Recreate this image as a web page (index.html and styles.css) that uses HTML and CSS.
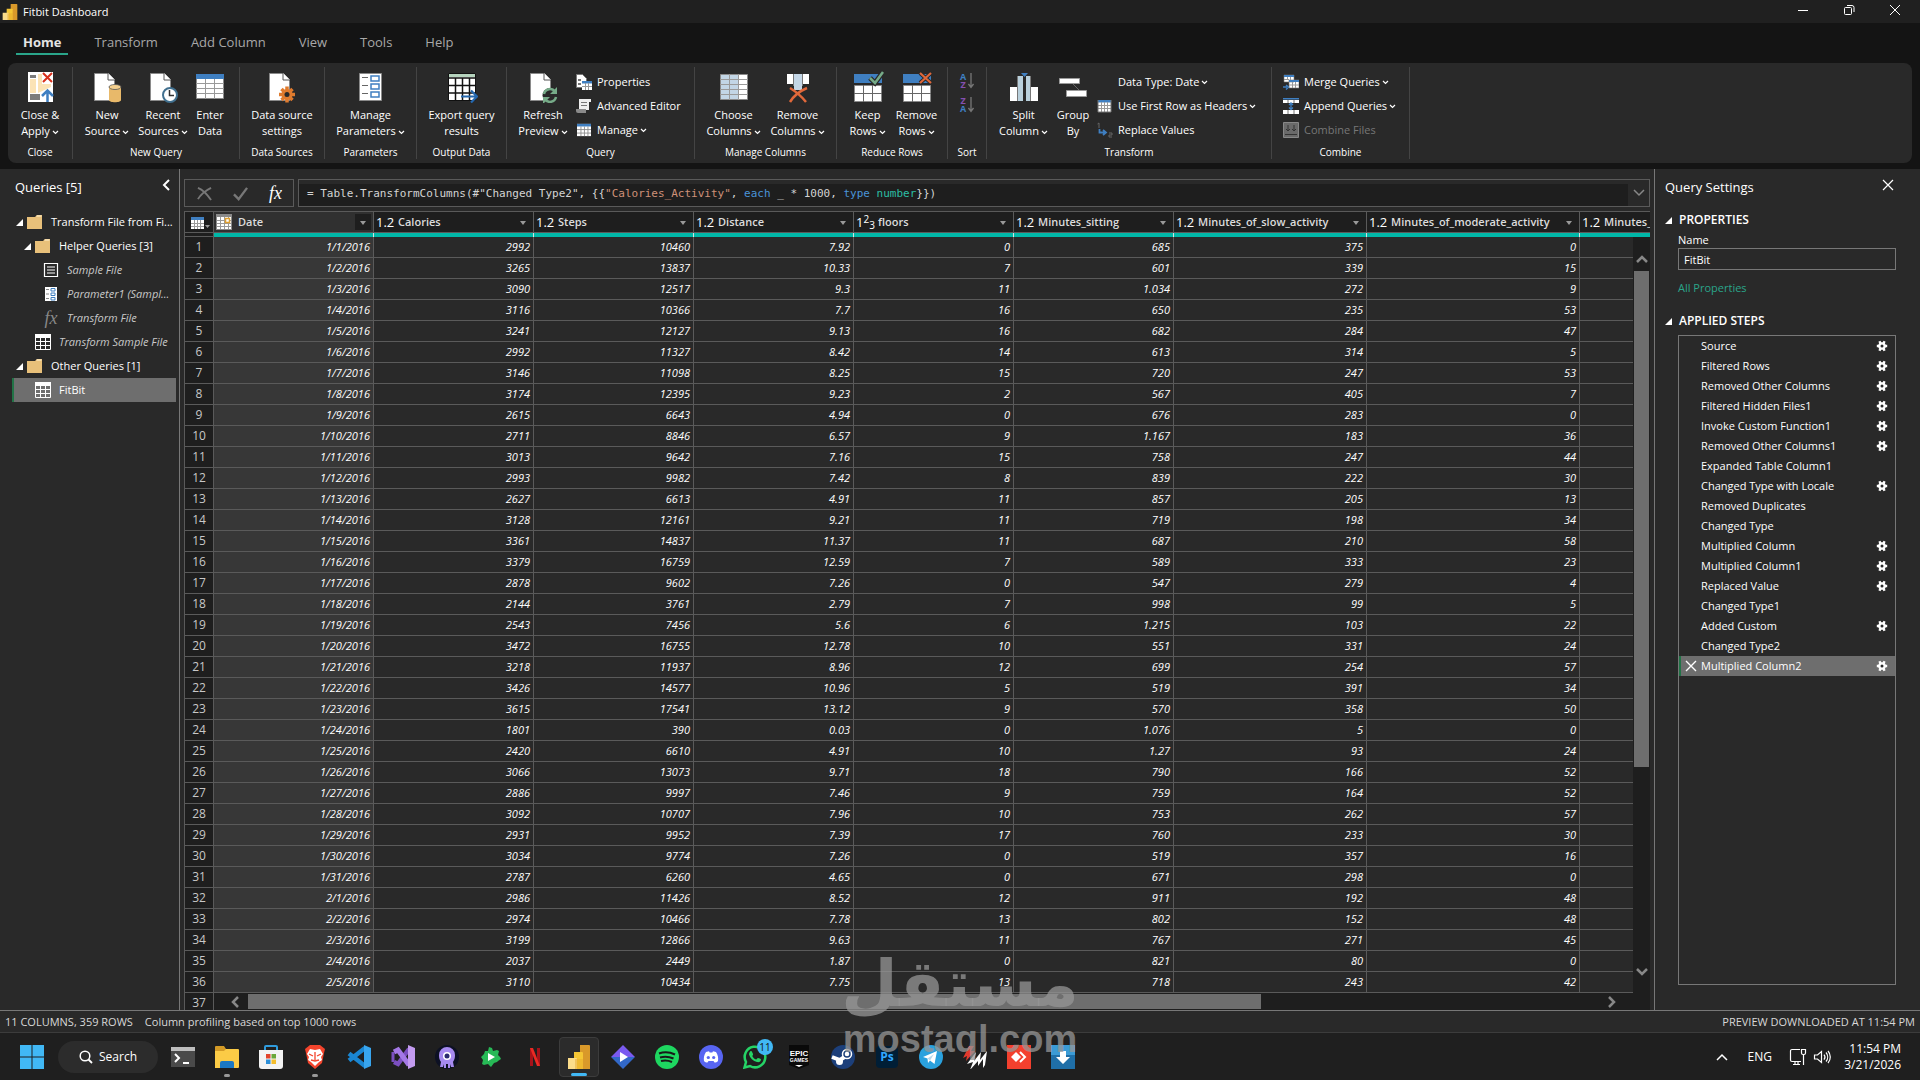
FILE: index.html
```html
<!DOCTYPE html>
<html lang="en">
<head>
    <meta charset="UTF-8">
    <meta name="viewport" content="width=device-width, initial-scale=1.0">
    <title>Fitbit Dashboard</title>
    <link rel="stylesheet" href="styles.css">
</head>
<body>
    <!-- Shared icons -->
    <svg class="sprite" aria-hidden="true">
        <symbol id="i-chev" viewBox="0 0 7 5"><path d="M1 1l2.5 2.5L6 1" fill="none" stroke="currentColor" stroke-width="1.2"/></symbol>
        <symbol id="i-gear" viewBox="0 0 12 12"><g stroke="#fff" stroke-width="2.4"><path d="M6 .8v10.400M1.200 3.400l9.600 5.200M10.800 3.400L1.200 8.600" transform="rotate(90 6 6)"/></g><circle cx="6" cy="6" r="3.800" fill="#fff"/><circle cx="6" cy="6" r="1.500" fill="#292929"/></symbol>
        <symbol id="i-tri" viewBox="0 0 7 7"><path d="M7 0v7H0z" fill="#fff"/></symbol>
        <symbol id="i-folder" viewBox="0 0 16 14"><path d="M0 2h8l2-2h5v14H0z" fill="#e8c07a"/><path d="M9.500 1h5" stroke="#fff3d6"/></symbol>
        <symbol id="i-doc" viewBox="0 0 32 32"><path d="M3.500 2.500h14l6 6v21h-20z" fill="#fff" stroke="#8a8a8a"/><path d="M17 2v7h7" fill="#fff" stroke="#555"/></symbol>
        <symbol id="i-table" viewBox="0 0 16 14"><path d="M0 0h16v14H0z" fill="#fff"/><path d="M0 0h16v3H0z" fill="#3f7fc1"/><path d="M0 6.500h16M0 10.500h16M4.500 3v11M8.500 3v11M12.500 3v11" stroke="#8a8a8a"/></symbol>
        <symbol id="i-grid" viewBox="0 0 16 16"><path d="M.5 1.500h15v14H.5zM.5 7.500h15M.5 11.500h15M5.500 4v12M10.500 4v12" fill="none" stroke="#fff"/><path d="M0 0h16v4H0z" fill="#fff"/></symbol>
        <symbol id="i-bi" viewBox="0 0 24 24"><path d="M13 0h9a1 1 0 0 1 1 1v23H13z" fill="#d9992a"/><path d="M7 7h8a1 1 0 0 1 1 1v16H7z" fill="#f5c634"/><path d="M1 13h8a1 1 0 0 1 1 1v10H1z" fill="#fbdc8a"/><path d="M8 14h8v10H8z" fill="#e8a92c" opacity=".5"/></symbol>
        <symbol id="i-rows" viewBox="0 0 32 32"><path d="M2 3h28v9H2z" fill="#3f7fc1"/><path d="M2.500 14.500h27v16h-27z" fill="#fff" stroke="#8a8a8a"/><path d="M2 22.500h28M11.500 14v17M20.500 14v17" stroke="#666"/></symbol>
    </svg>

    <header class="titlebar">
        <svg class="app-logo"><use href="#i-bi"/></svg>
        <h1>Fitbit Dashboard</h1>
        <div class="window-btns">
            <button aria-label="Minimize"><svg viewBox="0 0 12 12"><path d="M1 6.500h10" stroke="#fff"/></svg></button>
            <button aria-label="Restore"><svg viewBox="0 0 12 12" fill="none" stroke="#fff"><rect x="1.500" y="3.500" width="7" height="7" rx="1"/><path d="M4 1.500h5a2 2 0 0 1 2 2V8"/></svg></button>
            <button aria-label="Close"><svg viewBox="0 0 12 12"><path d="M1 1l10 10M11 1L1 11" stroke="#fff"/></svg></button>
        </div>
    </header>

    <nav class="tabs">
        <button class="tab active">Home</button>
        <button class="tab">Transform</button>
        <button class="tab">Add Column</button>
        <button class="tab">View</button>
        <button class="tab">Tools</button>
        <button class="tab">Help</button>
    </nav>

    <section class="ribbon">
        <div class="group">
            <div class="tools">
                <button class="big"><svg viewBox="0 0 32 32"><path d="M4 1h25v30H4z" fill="#fff"/><path d="M6 8h6v14H6zM14 3h4v10h9v3L14 22z" fill="#fbe3b5"/><path d="M6 4h6v3H6zM6 23h10v6H6z" fill="#7c7c7c"/><path d="M19 2l9 9M28 2l-9 9" stroke="#d8301c" stroke-width="2"/><path d="M23.500 31V20M18 25l5.500-5.500L29 25" fill="none" stroke="#3f7fc1" stroke-width="2.500"/></svg><span>Close &amp;<br>Apply<svg class="chev"><use href="#i-chev"/></svg></span></button>
            </div>
            <p>Close</p>
        </div>
        <div class="group new-query">
            <div class="tools">
                <button class="big"><svg viewBox="0 0 32 32"><use href="#i-doc"/><path d="M18 16v13c0 3 12 3 12 0V16z" fill="#e8b96a"/><ellipse cx="24" cy="16" rx="6" ry="2.500" fill="#f3cf8e" stroke="#555" stroke-width=".8"/></svg><span>New<br>Source<svg class="chev"><use href="#i-chev"/></svg></span></button>
                <button class="big"><svg viewBox="0 0 32 32"><use href="#i-doc"/><circle cx="23" cy="24" r="7" fill="#fff" stroke="#41708f" stroke-width="2"/><path d="M22.500 19v5.500H27" fill="none" stroke="#333" stroke-width="1.500"/></svg><span>Recent<br>Sources<svg class="chev"><use href="#i-chev"/></svg></span></button>
                <button class="big"><svg viewBox="0 0 32 32"><path d="M2.500 3.500h27v24h-27z" fill="#fff" stroke="#8a8a8a"/><path d="M2 3h28v5H2z" fill="#3f7fc1"/><path d="M2 12.500h28M2 17.500h28M2 22.500h28M11.500 8v20M20.500 8v20" stroke="#999"/></svg><span>Enter<br>Data</span></button>
            </div>
            <p>New Query</p>
        </div>
        <div class="group">
            <div class="tools">
                <button class="big"><svg viewBox="0 0 32 32"><use href="#i-doc"/><g stroke="#e07b2e" stroke-width="3.500"><path d="M21 15.500v16M13 23.500h16M15.500 18l11 11M26.500 18l-11 11"/></g><circle cx="21" cy="23.500" r="5.500" fill="#e07b2e"/><circle cx="21" cy="23.500" r="2.500" fill="#292929"/></svg><span>Data source<br>settings</span></button>
            </div>
            <p>Data Sources</p>
        </div>
        <div class="group">
            <div class="tools">
                <button class="big"><svg viewBox="0 0 32 32"><path d="M5.500 2.500h22v27h-22z" fill="#fff" stroke="#8a8a8a"/><path d="M8 6.500h6M8 14.500h6M8 22.500h6" stroke="#666"/><path d="M17 5h8v5h-8zM17 13h8v5h-8zM17 21h8v5h-8z" fill="none" stroke="#3f7fc1" stroke-width="1.500"/></svg><span>Manage<br>Parameters<svg class="chev"><use href="#i-chev"/></svg></span></button>
            </div>
            <p>Parameters</p>
        </div>
        <div class="group">
            <div class="tools">
                <button class="big"><svg viewBox="0 0 32 32"><path d="M2.500 2.500h27v27h-27z" fill="#fff" stroke="#111"/><path d="M3 3h26v3H3z" fill="#b5d3bd"/><path d="M2 7h28M2 14.500h28M2 22h28M9.500 7v23M16.500 7v23M23.500 7v23" stroke="#111" stroke-width="1.500"/><path d="M15 25.500h15M25 19.500l6 6-6 6" fill="none" stroke="#2468b0" stroke-width="2.200"/></svg><span>Export query<br>results</span></button>
            </div>
            <p>Output Data</p>
        </div>
        <div class="group query">
            <div class="tools">
                <button class="big"><svg viewBox="0 0 32 32"><use href="#i-doc"/><circle cx="23" cy="24.500" r="7.500" fill="#292929"/><path d="M17 23a6 6 0 0 1 11-2M29 26a6 6 0 0 1-11 2" fill="none" stroke="#76ab88" stroke-width="2.500"/><path d="M30 16v7h-7zM16 33v-7h7z" fill="#76ab88"/></svg><span>Refresh<br>Preview<svg class="chev"><use href="#i-chev"/></svg></span></button>
                <div class="list">
                    <button><svg viewBox="0 0 16 16"><path d="M.5.5h6l4 4v9H.5z" fill="#fff" stroke="#777"/><path d="M2 5h3v2H2zM2 9h3v2H2z" fill="#777"/><path d="M6 7h10v9H6z" fill="#fff"/><path d="M6 7h10v2.500H6z" fill="#3f7fc1"/><path d="M6 12.500h10M9.500 9v7M12.500 9v7" stroke="#999"/></svg>Properties</button>
                    <button><svg viewBox="0 0 16 16"><path d="M3 1h12v3h-2v8H3z" fill="#eee"/><path d="M0 11h10v4H2a2 2 0 0 1-2-2z" fill="#8a8a8a"/><path d="M5 4.500h6M5 7.500h6" stroke="#777"/></svg>Advanced Editor</button>
                    <button><svg viewBox="0 0 16 16"><use href="#i-table" x="1" y="1" width="14" height="14"/></svg>Manage<svg class="chev"><use href="#i-chev"/></svg></button>
                </div>
            </div>
            <p>Query</p>
        </div>
        <div class="group">
            <div class="tools">
                <button class="big col"><svg viewBox="0 0 32 32"><path d="M2.500 3.500h27v25h-27z" fill="#fff" stroke="#8a8a8a"/><path d="M3 4h18v24H3z" fill="#c3d6e6"/><path d="M2 8.500h28M2 13.500h28M2 18.500h28M2 23.500h28M11.500 3v26M20.500 3v26" stroke="#9a9a9a"/></svg><span>Choose<br>Columns<svg class="chev"><use href="#i-chev"/></svg></span></button>
                <button class="big col"><svg viewBox="0 0 32 32"><path d="M5 3h22v10H5z" fill="#fff"/><path d="M12 3h8v16h-8z" fill="#c3d6e6"/><path d="M11.500 3v12M20.500 3v12" stroke="#777"/><path d="M8 17c5 3 12 9 16 14M25 17C18 20 11 26 8 31" fill="none" stroke="#e0683a" stroke-width="2.500"/></svg><span>Remove<br>Columns<svg class="chev"><use href="#i-chev"/></svg></span></button>
            </div>
            <p>Manage Columns</p>
        </div>
        <div class="group">
            <div class="tools">
                <button class="big row"><svg viewBox="0 0 32 32"><use href="#i-rows"/><path d="M18 7l5 5 8-11" fill="none" stroke="#292929" stroke-width="5"/><path d="M18 7l5 5 8-11" fill="none" stroke="#76ab88" stroke-width="2.500"/></svg><span>Keep<br>Rows<svg class="chev"><use href="#i-chev"/></svg></span></button>
                <button class="big row"><svg viewBox="0 0 32 32"><use href="#i-rows"/><path d="M19 2l11 10M30 2L19 12" stroke="#292929" stroke-width="4"/><path d="M19 2l11 10M30 2L19 12" stroke="#e0683a" stroke-width="2.200"/></svg><span>Remove<br>Rows<svg class="chev"><use href="#i-chev"/></svg></span></button>
            </div>
            <p>Reduce Rows</p>
        </div>
        <div class="group">
            <div class="sort">
                <button aria-label="Sort ascending"><span class="letters"><b class="a">A</b><b class="z">Z</b></span><svg viewBox="0 0 6 16"><path d="M3 0v13M.5 11L3 14.500 5.500 11" fill="none" stroke="#777" stroke-width="1.300"/></svg></button>
                <button aria-label="Sort descending"><span class="letters"><b class="z">Z</b><b class="a">A</b></span><svg viewBox="0 0 6 16"><path d="M3 0v13M.5 11L3 14.500 5.500 11" fill="none" stroke="#777" stroke-width="1.300"/></svg></button>
            </div>
            <p>Sort</p>
        </div>
        <div class="group transform">
            <div class="tools">
                <button class="big split"><svg viewBox="0 0 32 32"><path d="M2 16h7v14H2zM23 16h7v14h-7z" fill="#fff"/><path d="M10 5h5v25h-5zM18 5h5v25h-5z" fill="#b9d0dc"/><path d="M13 2h7l-3.500 4z" fill="#3f7fc1"/><path d="M9.500 5v25M22.500 5v25" stroke="#777"/></svg><span>Split<br>Column<svg class="chev"><use href="#i-chev"/></svg></span></button>
                <button class="big by"><svg viewBox="0 0 32 32"><path d="M2.500 7.500h20v5h-20zM9.500 19.500h20v6h-20z" fill="#fff" stroke="#9a9a9a"/><path d="M16 13l6 6" stroke="#666"/></svg><span>Group<br>By</span></button>
                <div class="list">
                    <button><svg viewBox="0 0 16 16"></svg>Data Type: Date<svg class="chev"><use href="#i-chev"/></svg></button>
                    <button><svg viewBox="0 0 16 16"><path d="M1 2h13v12H1z" fill="#fff"/><path d="M1 2h13v2.500H1z" fill="#3f7fc1"/><path d="M1 7.500h13M1 10.500h13M4.500 4v10M7.500 4v10M10.500 4v10" stroke="#999"/><path d="M1 2v12h13V2" fill="none" stroke="#777"/></svg>Use First Row as Headers<svg class="chev"><use href="#i-chev"/></svg></button>
                    <button><svg viewBox="0 0 16 16"><path d="M.5 2l1.500-1v5M12 11h3v2h-3v2h3" fill="none" stroke="#666"/><path d="M2.500 7v3.500H8M6 8l3 2.500L6 13" fill="none" stroke="#3f7fc1" stroke-width="1.800"/></svg>Replace Values</button>
                </div>
            </div>
            <p>Transform</p>
        </div>
        <div class="group combine">
            <div class="tools">
                <div class="list">
                    <button><svg viewBox="0 0 16 16"><path d="M1 1h10v7H1zM6 6h10v8H6z" fill="#fff" stroke="#777" stroke-width=".6"/><path d="M1 1h10v2H1zM6 6h10v2H6z" fill="#3f7fc1"/><path d="M1 5.500h5M4.500 3v3M7.500 3v3M6 11h10M9.500 8v6M12.500 8v6" stroke="#999"/><path d="M0 13h4M3 11l2.500 2L3 15.500" fill="none" stroke="#3f7fc1" stroke-width="1.500"/></svg>Merge Queries<svg class="chev"><use href="#i-chev"/></svg></button>
                    <button><svg viewBox="0 0 16 16"><path d="M0 0h16v1.500H0z" fill="#3f7fc1"/><path d="M0 2h16v3H0zM0 12h16v4H0z" fill="#fff"/><path d="M5 2v3M11 2v3M5 12v4M11 12v4" stroke="#777"/><path d="M8 5v6M6 7l2-2 2 2M6 9.500l2 2 2-2" fill="none" stroke="#3f7fc1" stroke-width="1.300"/></svg>Append Queries<svg class="chev"><use href="#i-chev"/></svg></button>
                    <button disabled><svg viewBox="0 0 16 16"><path d="M.5.5h15v15H.5z" fill="#6a6a6a" stroke="#888"/><path d="M5 3v6M3 7l2 2 2-2M11 3v6M9 7l2 2 2-2M2 12.500h12" fill="none" stroke="#333"/></svg>Combine Files</button>
                </div>
            </div>
            <p>Combine</p>
        </div>
    </section>

    <main class="workspace">
        <aside class="queries">
            <div class="pane-head">
                <h2>Queries [5]</h2>
                <button aria-label="Collapse"><svg viewBox="0 0 8 12"><path d="M7 1L2 6l5 5" fill="none" stroke="#fff" stroke-width="2"/></svg></button>
            </div>
            <ul class="tree">
                <li class="l1"><svg class="tri"><use href="#i-tri"/></svg><svg class="folder"><use href="#i-folder"/></svg><span>Transform File from Fi...</span></li>
                <li class="l2"><svg class="tri"><use href="#i-tri"/></svg><svg class="folder"><use href="#i-folder"/></svg><span>Helper Queries [3]</span></li>
                <li class="l3 item"><svg viewBox="0 0 16 16"><path d="M1.500 1.500h13v13h-13zM4 5h8M4 8h8M4 11h8" fill="none" stroke="#fff" stroke-width="1.200"/></svg><span>Sample File</span></li>
                <li class="l3 item"><svg viewBox="0 0 16 16"><path d="M2 1h12v14H2z" fill="#fff"/><path d="M3 3.500h3M3 8h3M3 12.500h3" stroke="#888"/><path d="M8 2.500h4v2.500H8zM8 7h4v2.500H8zM8 11.500h4V14H8z" fill="none" stroke="#3f7fc1"/></svg><span>Parameter1 (Sampl...</span></li>
                <li class="l3 item"><i class="fx">fx</i><span>Transform File</span></li>
                <li class="l2 item"><svg><use href="#i-grid"/></svg><span>Transform Sample File</span></li>
                <li class="l1"><svg class="tri"><use href="#i-tri"/></svg><svg class="folder"><use href="#i-folder"/></svg><span>Other Queries [1]</span></li>
                <li class="selected"><svg><use href="#i-grid"/></svg><span>FitBit</span></li>
            </ul>
        </aside>

        <section class="editor">
            <div class="formula">
                <div class="formula-btns">
                    <button aria-label="Cancel"><svg viewBox="0 0 16 16"><path d="M1 2c5 2 10 7 14 13M15 2C9 5 4 9 1 14" fill="none" stroke="#777" stroke-width="2"/></svg></button>
                    <button aria-label="Commit"><svg viewBox="0 0 16 16"><path d="M1 9l5 5L15 2" fill="none" stroke="#777" stroke-width="2.500"/></svg></button>
                    <button aria-label="Add step" class="fx">fx</button>
                </div>
                <div class="formula-text">
                    <code>= Table.TransformColumns(#"Changed Type2", {{<span class="str">"Calories_Activity"</span>, <span class="kw">each</span> _ * 1000, <span class="kw">type</span> <span class="ty">number</span>}})</code>
                    <button aria-label="Expand"><svg viewBox="0 0 12 8"><path d="M1 1l5 5 5-5" fill="none" stroke="#888" stroke-width="1.500"/></svg></button>
                </div>
            </div>

            <div class="grid">
                <table>
                    <colgroup>
                        <col class="c-num"><col class="c-std"><col class="c-std"><col class="c-std"><col class="c-std"><col class="c-std"><col class="c-std"><col class="c-slow"><col class="c-moderate"><col class="c-last">
                    </colgroup>
                    <thead>
                        <tr id="head"></tr>
                        <tr class="quality" id="quality"></tr>
                    </thead>
                    <tbody id="rows"></tbody>
                </table>
                <div class="vscroll">
                    <svg viewBox="0 0 12 8"><path d="M1 7l5-5 5 5" fill="none" stroke="#888" stroke-width="2.500"/></svg>
                    <div class="track"><div class="thumb"></div></div>
                    <svg viewBox="0 0 12 8"><path d="M1 1l5 5 5-5" fill="none" stroke="#888" stroke-width="2.500"/></svg>
                </div>
                <div class="hscroll">
                    <svg viewBox="0 0 8 12"><path d="M7 1L2 6l5 5" fill="none" stroke="#888" stroke-width="2.500"/></svg>
                    <div class="track"><div class="thumb"></div></div>
                    <svg viewBox="0 0 8 12"><path d="M1 1l5 5-5 5" fill="none" stroke="#888" stroke-width="2.500"/></svg>
                </div>
            </div>
        </section>

        <aside class="settings">
            <div class="pane-head">
                <h2>Query Settings</h2>
                <button aria-label="Close"><svg viewBox="0 0 12 12"><path d="M1 1l10 10M11 1L1 11" stroke="#fff" stroke-width="1.200"/></svg></button>
            </div>
            <h3><svg class="tri"><use href="#i-tri"/></svg>PROPERTIES</h3>
            <div class="props">
                <label for="queryName">Name</label>
                <input type="text" id="queryName" value="FitBit">
                <a href="#">All Properties</a>
            </div>
            <h3><svg class="tri"><use href="#i-tri"/></svg>APPLIED STEPS</h3>
            <ul class="steps" id="steps"></ul>
        </aside>
    </main>

    <footer class="status">
        <span>11 COLUMNS, 359 ROWS</span>
        <span>Column profiling based on top 1000 rows</span>
        <span class="preview">PREVIEW DOWNLOADED AT 11:54 PM</span>
    </footer>

    <div class="taskbar">
        <button class="app" aria-label="Start"><svg viewBox="0 0 24 24"><path d="M0 0h11.500v11.500H0zM12.500 0H24v11.500H12.500zM0 12.500h11.500V24H0zM12.500 12.500H24V24H12.500z" fill="#41b8f5"/></svg></button>
        <button class="search"><svg viewBox="0 0 14 14"><circle cx="6" cy="6" r="4.800" fill="none" stroke="#fff" stroke-width="1.500"/><path d="M9.500 9.500L13 13" stroke="#fff" stroke-width="1.800"/></svg>Search</button>
        <button class="app" aria-label="Terminal"><svg viewBox="0 0 24 24"><path d="M0 2h24v20H0z" fill="#4a4a4a"/><path d="M0 2h24v4H0z" fill="#bdbdbd"/><path d="M4 9l4 4-4 4M12 18h6" fill="none" stroke="#fff" stroke-width="2"/></svg></button>
        <button class="app running" aria-label="Explorer"><svg viewBox="0 0 24 24"><path d="M0 2a1 1 0 0 1 1-1h8l2 3h12v6H0z" fill="#d39a26"/><path d="M0 6h9l2-2h12a1 1 0 0 1 1 1v17a1 1 0 0 1-1 1H0z" fill="#fbcb46"/><path d="M5 23v-5a2 2 0 0 1 2-2h10a2 2 0 0 1 2 2v5z" fill="#1b78c4"/></svg></button>
        <button class="app" aria-label="Store"><svg viewBox="0 0 24 24"><path d="M6 6V2a1 1 0 0 1 1-1h10a1 1 0 0 1 1 1v4" fill="none" stroke="#2f9bdc" stroke-width="2"/><path d="M0 5h24v16a3 3 0 0 1-3 3H3a3 3 0 0 1-3-3z" fill="#f3f3f3"/><path d="M7 9h4.500v4.500H7z" fill="#e2442c"/><path d="M12.500 9H17v4.500h-4.500z" fill="#6aa83a"/><path d="M7 14.500h4.500V19H7z" fill="#2d8fd8"/><path d="M12.500 14.500H17V19h-4.500z" fill="#f4bd2c"/></svg></button>
        <button class="app running" aria-label="Brave"><svg viewBox="0 0 24 24"><path d="M7 0h10l5 4-1 4-2 10-7 6-7-6L3 8 2 4z" fill="#f4442c"/><path d="M7 4l5 1 5-1 3 5-2 3 1 3-3 2-4 4-4-4-3-2 1-3-2-3z" fill="#fff"/><path d="M12 7v8M6 9l4 2M18 9l-4 2M8 15l4 1 4-1" fill="none" stroke="#f4442c" stroke-width="1.300"/></svg></button>
        <button class="app" aria-label="VS Code"><svg viewBox="0 0 24 24"><path d="M18 3L2 15.500M18 21L2 8.500" stroke="#1a86d2" stroke-width="4.500"/><path d="M17 0l7 3v18l-7 3z" fill="#38a5ee"/></svg></button>
        <button class="app" aria-label="Visual Studio"><svg viewBox="0 0 24 24"><path d="M2 7v10" stroke="#7b4fc0" stroke-width="3"/><path d="M3 17l4 2L18 4" fill="none" stroke="#7b4fc0" stroke-width="4.500"/><path d="M3 7l4-2 11 15" fill="none" stroke="#a478e6" stroke-width="5"/><path d="M17 0l7 3v18l-7 3z" fill="#c39bf0"/></svg></button>
        <button class="app" aria-label="Octopus"><svg viewBox="0 0 24 24"><circle cx="12" cy="12" r="12" fill="#0d1124"/><path d="M4 10a8 8 0 0 1 16 0c0 4-1 5-2 7l1 5h-3l-1-3v4h-2v-4h-2v4H9v-4l-1 3H5l1-5c-1-2-2-3-2-7z" fill="#a68af0"/><circle cx="12" cy="11" r="4" fill="#fff"/><circle cx="12" cy="11" r="2.500" fill="#2a2a70"/></svg></button>
        <button class="app" aria-label="Player"><svg viewBox="0 0 24 24"><path d="M10 2l3 1 1 3 4-1 2 1-1 4 2 2 1 2-3 2-1 1-3 1-3 4-3-3-4 1-2-1 1-4-2-3 3-3 1-3 3 0z" fill="#27b956"/><path d="M9 8l7 4-7 4z" fill="#fff"/></svg></button>
        <button class="app" aria-label="Netflix"><svg viewBox="0 0 24 24"><path d="M7 3h3v18H7zM14 3h3v18h-3z" fill="#a5121a"/><path d="M7 3h3l7 18h-3z" fill="#ea2a24"/></svg></button>
        <button class="app current" aria-label="Power BI"><svg><use href="#i-bi"/></svg></button>
        <button class="app" aria-label="Clipchamp"><svg viewBox="0 0 24 24"><path d="M12 0l12 12H0z" fill="#7a5af0"/><path d="M0 12h24L12 24z" fill="#3268c8"/><path d="M9 7l8 5-8 5z" fill="#fff"/></svg></button>
        <button class="app" aria-label="Spotify"><svg viewBox="0 0 24 24"><circle cx="12" cy="12" r="12" fill="#1ed760"/><path d="M4 8.500c5-2 11-1.500 16 1M5 12.500c5-1.500 9-1 13.500 1M6 16c4-1 7-.8 11 1" fill="none" stroke="#191919" stroke-width="2"/></svg></button>
        <button class="app" aria-label="Discord"><svg viewBox="0 0 24 24"><circle cx="12" cy="12" r="12" fill="#5865f2"/><path d="M7 7l3-.8.7 1.300h2.600l.7-1.300L17 7c2 3 2.500 6 2 9-1 1-2 1.500-3.500 1.500l-1-1.500h-5l-1 1.500C7 17.500 6 17 5 16c-.5-3 0-6 2-9z" fill="#fff"/><circle cx="9.300" cy="12.500" r="1.600" fill="#5865f2"/><circle cx="14.700" cy="12.500" r="1.600" fill="#5865f2"/></svg></button>
        <button class="app" aria-label="WhatsApp"><svg viewBox="0 0 24 24"><path d="M1.500 22.500L3 17a10.300 10.300 0 1 1 4 4z" fill="#1f1f1f" stroke="#25d366" stroke-width="2.500"/><path d="M8 6c1 0 1.500 2 2 3s-1 1.500-.5 2.500c1 1.500 2 2.500 3.500 3 1 0 1-1.500 2-1.500s3 1 3 1.500c0 2-2 3-4 2.500-4-1-7-4-8-7.500C6 8 7 6 8 6z" fill="#25d366"/></svg><span class="badge">11</span></button>
        <button class="app" aria-label="Epic Games"><svg viewBox="0 0 24 24"><path d="M2 0h20v20l-10 4-10-4z" fill="#0a0a0a"/><text x="12" y="11" text-anchor="middle" class="epic">EPIC</text><text x="12" y="17" text-anchor="middle" class="games">GAMES</text><path d="M8 20h8l-4 2z" fill="#fff"/></svg></button>
        <button class="app" aria-label="Steam"><svg viewBox="0 0 24 24"><circle cx="12" cy="12" r="12" fill="#1c3f7a"/><path d="M1 12l8 3 6-4" fill="none" stroke="#fff" stroke-width="4"/><circle cx="16" cy="9" r="4.500" fill="#1c3f7a" stroke="#fff" stroke-width="1.500"/><circle cx="16" cy="9" r="2.300" fill="#fff"/><circle cx="8.500" cy="16.500" r="3.500" fill="#fff"/></svg></button>
        <button class="app" aria-label="Photoshop"><svg viewBox="0 0 24 24"><rect x="1" y="1" width="22" height="22" rx="4" fill="#001e36"/><text x="12" y="16" text-anchor="middle" class="ps">Ps</text></svg></button>
        <button class="app" aria-label="Telegram"><svg viewBox="0 0 24 24"><circle cx="12" cy="12" r="12" fill="#2aa1de"/><path d="M4 12l14-6-2.500 13-4.500-3.500L9 18l-.5-4.500z" fill="#fff"/><path d="M8.500 13.500L15 9l-4 6.500" fill="#b9d9ec"/></svg></button>
        <button class="app" aria-label="MSI"><svg viewBox="0 0 24 24"><path d="M0 13L6 1h5L8 6h4L3 16l1-5z" fill="#e23a2c"/><path d="M4 19l9-12-2 9 7-9-1 8 7-9-2 14-2 3v-9l-5 7v-5l-8 9 3-8z" fill="#fff"/></svg></button>
        <button class="app" aria-label="AnyDesk"><svg viewBox="0 0 24 24"><path d="M0 0h24v24H0z" fill="#f3402e"/><path d="M9 7l5 5-5 5-5-5z" fill="#fff"/><path d="M13 7l5 5-5 5" fill="none" stroke="#fff" stroke-width="2"/></svg></button>
        <button class="app" aria-label="Downloader"><svg viewBox="0 0 24 24"><path d="M0 0h24v24H0z" fill="#1f6fa8"/><path d="M0 0h24v10H0z" fill="#3b9bd6"/><path d="M9 6h6v6h4l-7 7-7-7h4z" fill="#fff"/></svg></button>
        <div class="tray">
            <button aria-label="Hidden icons"><svg viewBox="0 0 12 8"><path d="M1 7l5-5 5 5" fill="none" stroke="#fff" stroke-width="1.500"/></svg></button>
            <span class="lang">ENG</span>
            <svg class="net" viewBox="0 0 18 18" fill="none" stroke="#fff" stroke-width="1.200"><path d="M11 1.500H3a1.500 1.500 0 0 0-1.500 1.500v9A1.500 1.500 0 0 0 3 13.500h9M4 16.500h7M6 14v2M9 14v2M12.500 1.500h4V5a1.500 1.500 0 0 1-1.500 1.500h-1A1.500 1.500 0 0 1 12.500 5zM14.500 7v10"/></svg>
            <svg class="vol" viewBox="0 0 18 18" fill="none" stroke="#fff" stroke-width="1.200"><path d="M1.500 7v4h3l4 3.500v-11L4.500 7zM11 6.500a4 4 0 0 1 0 5M13 4.500a7 7 0 0 1 0 9M15 3a9 9 0 0 1 0 12"/></svg>
            <time>11:54 PM<br>3/21/2026</time>
        </div>
    </div>

    <div class="watermark" aria-hidden="true">
        <span class="ar" lang="ar" dir="rtl">مستقل</span>
        <span class="en">mostaql.com</span>
    </div>

    <script>
        const columns = [
            ['date', 'Date'], ['1.2', 'Calories'], ['1.2', 'Steps'], ['1.2', 'Distance'], ['123', 'floors'],
            ['1.2', 'Minutes_sitting'], ['1.2', 'Minutes_of_slow_activity'], ['1.2', 'Minutes_of_moderate_activity'], ['1.2', 'Minutes_']
        ];

        // date, calories, steps, distance, floors, sitting, slow, moderate
        const data = `1/1/2016 2992 10460 7.92 0 685 375 0
1/2/2016 3265 13837 10.33 7 601 339 15
1/3/2016 3090 12517 9.3 11 1.034 272 9
1/4/2016 3116 10366 7.7 16 650 235 53
1/5/2016 3241 12127 9.13 16 682 284 47
1/6/2016 2992 11327 8.42 14 613 314 5
1/7/2016 3146 11098 8.25 15 720 247 53
1/8/2016 3174 12395 9.23 2 567 405 7
1/9/2016 2615 6643 4.94 0 676 283 0
1/10/2016 2711 8846 6.57 9 1.167 183 36
1/11/2016 3013 9642 7.16 15 758 247 44
1/12/2016 2993 9982 7.42 8 839 222 30
1/13/2016 2627 6613 4.91 11 857 205 13
1/14/2016 3128 12161 9.21 11 719 198 34
1/15/2016 3361 14837 11.37 11 687 210 58
1/16/2016 3379 16759 12.59 7 589 333 23
1/17/2016 2878 9602 7.26 0 547 279 4
1/18/2016 2144 3761 2.79 7 998 99 5
1/19/2016 2543 7456 5.6 6 1.215 103 22
1/20/2016 3472 16755 12.78 10 551 331 24
1/21/2016 3218 11937 8.96 12 699 254 57
1/22/2016 3426 14577 10.96 5 519 391 34
1/23/2016 3615 17541 13.12 9 570 358 50
1/24/2016 1801 390 0.03 0 1.076 5 0
1/25/2016 2420 6610 4.91 10 1.27 93 24
1/26/2016 3066 13073 9.71 18 790 166 52
1/27/2016 2886 9997 7.46 9 759 164 52
1/28/2016 3092 10707 7.96 10 753 262 57
1/29/2016 2931 9952 7.39 17 760 233 30
1/30/2016 3034 9774 7.26 0 519 357 16
1/31/2016 2787 6260 4.65 0 671 298 0
2/1/2016 2986 11426 8.52 12 911 192 48
2/2/2016 2974 10466 7.78 13 802 152 48
2/3/2016 3199 12866 9.63 11 767 271 45
2/4/2016 2037 2449 1.87 0 821 80 0
2/5/2016 3110 10434 7.75 13 718 243 42`.split('\n').map(line => line.split(' '));

        const typeIcons = {
            'date': '<svg class="type" viewBox="0 0 16 16"><path d="M0 0h16v16H0z" fill="#8a8a8a"/><path d="M1 3h14v12H1z" fill="#fff"/><path d="M1 6.500h14M1 9.500h14M1 12.500h14M4.500 3v12M8.500 3v12M12.500 3v12" stroke="#999"/><path d="M9.500 4.500h4v4h-4z" fill="#fff" stroke="#e0a030" stroke-width="1.500"/></svg>',
            '1.2': '<span class="type">1.2</span>',
            '123': '<span class="type">1<sup>2</sup><sub>3</sub></span>'
        };
        const arrow = '<button aria-label="Filter"><svg viewBox="0 0 8 5"><path d="M1 0h6L4 4z" fill="#999"/></svg></button>';
        const corner = '<svg class="corner" viewBox="0 0 20 14"><path d="M0 1h13v12H0z" fill="#fff"/><path d="M0 1h13v3H0z" fill="#3f7fc1"/><path d="M0 7.500h13M0 10.500h13M3.500 4v9M6.500 4v9M9.500 4v9" stroke="#999"/><path d="M14 9h5l-2.500 3z" fill="#999"/></svg>';

        document.getElementById('head').innerHTML = '<th>' + corner + '</th>' + columns.map(([type, name]) =>
            `<th><div class="th">${typeIcons[type]}<span>${name}</span>${name === 'Minutes_' ? '' : arrow}</div></th>`).join('');
        document.getElementById('quality').innerHTML = '<td></td>'.repeat(10);
        document.getElementById('rows').innerHTML = data.map((row, i) =>
            `<tr><th>${i + 1}</th>${row.map(v => `<td>${v}</td>`).join('')}<td></td></tr>`).join('')
            + '<tr><th>37</th>' + '<td></td>'.repeat(9) + '</tr>';

        // steps with a trailing * have a settings gear
        const steps = ['Source*', 'Filtered Rows*', 'Removed Other Columns*', 'Filtered Hidden Files1*', 'Invoke Custom Function1*',
            'Removed Other Columns1*', 'Expanded Table Column1', 'Changed Type with Locale*', 'Removed Duplicates', 'Changed Type',
            'Multiplied Column*', 'Multiplied Column1*', 'Replaced Value*', 'Changed Type1', 'Added Custom*', 'Changed Type2', 'Multiplied Column2*'];
        const remove = '<svg class="remove" viewBox="0 0 12 12"><path d="M1 1l10 10M11 1L1 11" stroke="#fff" stroke-width="1.400"/></svg>';

        document.getElementById('steps').innerHTML = steps.map((step, i) => {
            const last = i === steps.length - 1;
            const gear = step.endsWith('*') ? '<svg class="gear"><use href="#i-gear"/></svg>' : '';
            return `<li${last ? ' class="selected"' : ''}>${last ? remove : ''}<span>${step.replace('*', '')}</span>${gear}</li>`;
        }).join('');
    </script>
</body>
</html>
```
FILE: styles.css
```css
:root {
    --bg: #292929;
    --dark: #1e1e1e;
    --black: #141414;
    --line: #5a5a5a;
    --select: #6e6e6e;
    --teal: #00b7a8;
    --green: #2aa58a;
}

* {
    margin: 0;
    padding: 0;
    box-sizing: border-box;
}

body {
    display: flex;
    flex-direction: column;
    height: 100vh;
    overflow: hidden;
    background: var(--black);
    color: #fff;
    font: 11px/16px "Open Sans", "Noto Sans", sans-serif;
}

button {
    border: none;
    background: none;
    color: inherit;
    font: inherit;
}

h1, h2, h3 {
    font-size: 11px;
    font-weight: 400;
}

ul {
    list-style: none;
}

.sprite {
    position: absolute;
    width: 0;
    height: 0;
}

/* Title bar */
.titlebar {
    display: flex;
    align-items: center;
    height: 23px;
    padding: 0 2px;
    background: #202020;
}

.app-logo {
    width: 16px;
    height: 16px;
    margin-right: 5px;
}

.window-btns {
    display: flex;
    margin-left: auto;
}

.window-btns button {
    width: 46px;
    height: 20px;
}

.window-btns svg {
    width: 12px;
    height: 12px;
}

/* Tabs */
.tabs {
    display: flex;
    gap: 1px;
    height: 40px;
    padding-left: 7px;
}

.tab {
    position: relative;
    padding: 0 16px 2px;
    color: #a8a8a8;
    font-size: 13px;
}

.tab.active {
    color: #e4e4e4;
    font-weight: 700;
}

.tab.active::after {
    content: '';
    position: absolute;
    left: 9px;
    right: 9px;
    bottom: 8px;
    height: 2px;
    background: var(--green);
}

/* Ribbon */
.ribbon {
    display: grid;
    grid-template-columns: 65px 167px 85px 92px 90px 188px 142px 111px 39px 285px 138px;
    height: 100px;
    margin: 0 8px 6px;
    padding: 4px 0;
    border-radius: 8px;
    background: var(--bg);
}

.group {
    display: flex;
    flex-direction: column;
    justify-content: space-between;
    border-right: 1px solid #444;
    white-space: nowrap;
}

.group p {
    font-size: 10px;
    line-height: 14px;
    text-align: center;
}

.tools {
    display: flex;
    justify-content: center;
    padding-top: 4px;
}

.big {
    display: flex;
    flex-direction: column;
    align-items: center;
    gap: 4px;
}

.big > svg {
    width: 32px;
    height: 32px;
}

.chev {
    width: 7px;
    height: 5px;
    margin-left: 2px;
    vertical-align: middle;
}

.new-query .tools {
    justify-content: flex-start;
    padding-left: 6px;
}

.new-query .big {
    width: 56px;
}

.new-query .big:last-child {
    width: 38px;
}

.big.col {
    width: 64px;
}

.big.row {
    width: 49px;
}

.big.split {
    width: 55px;
}

.big.by {
    width: 44px;
}

.list {
    display: flex;
    flex-direction: column;
    margin-top: -1px;
}

.list button {
    display: flex;
    align-items: center;
    height: 24px;
}

.list button > svg:first-child {
    width: 16px;
    height: 16px;
    margin-right: 5px;
}

.list button:disabled {
    color: #777;
}

.query .tools,
.transform .tools,
.combine .tools {
    justify-content: flex-start;
}

.query .tools {
    padding-left: 3px;
}

.query .big {
    width: 66px;
}

.transform .tools {
    padding-left: 9px;
}

.transform .list {
    padding-left: 2px;
}

.combine .tools {
    padding-left: 11px;
}

.sort {
    display: flex;
    flex-direction: column;
    align-items: center;
    gap: 8px;
    padding-top: 6px;
}

.sort button {
    display: flex;
    align-items: center;
    gap: 2px;
}

.sort svg {
    width: 6px;
    height: 16px;
}

.letters {
    display: flex;
    flex-direction: column;
    font: 9px/8px "Open Sans", sans-serif;
}

.letters .a {
    color: #3f7fc1;
}

.letters .z {
    color: #8450b0;
}

/* Workspace */
.workspace {
    display: grid;
    grid-template-columns: 180px 1fr 266px;
    flex: 1;
    min-height: 0;
    background: var(--bg);
}

.pane-head {
    display: flex;
    align-items: center;
    justify-content: space-between;
    height: 36px;
}

.pane-head h2 {
    font-size: 13px;
}

.queries {
    border-right: 1px solid #777;
}

.queries .pane-head {
    padding: 0 9px 0 15px;
}

.queries .pane-head svg {
    width: 8px;
    height: 12px;
}

.tree {
    margin-top: 5px;
    padding: 0 3px 0 12px;
}

.tree li {
    display: flex;
    align-items: center;
    height: 24px;
    white-space: nowrap;
}

.tree svg,
.tree .fx {
    flex: none;
    width: 16px;
    height: 16px;
    margin-right: 8px;
}

.tree svg.tri,
.settings .tri {
    width: 7px;
    height: 7px;
    margin-right: 4px;
}

.tree svg.folder {
    height: 14px;
}

.tree .l1 {
    padding-left: 4px;
}

.tree .l2 {
    padding-left: 12px;
}

.tree .l2.item {
    padding-left: 23px;
}

.tree .l3 {
    padding-left: 31px;
}

.tree .item {
    color: #c8c8c8;
    font-style: italic;
}

.fx {
    font: italic 18px/16px "Liberation Serif", serif;
}

.tree .fx {
    color: #888;
    text-align: center;
}

.tree .selected {
    padding-left: 21px;
    border-left: 2px solid #217346;
    background: var(--select);
}

/* Formula bar and data grid */
.editor {
    display: flex;
    flex-direction: column;
    gap: 4px;
    min-width: 0;
    min-height: 0;
    padding: 10px 4px 0;
}

.formula {
    display: flex;
    gap: 4px;
    height: 28px;
}

.formula-btns,
.formula-text {
    display: flex;
    align-items: center;
    border: 1px solid var(--line);
}

.formula-btns {
    justify-content: space-between;
    width: 110px;
    padding: 0 11px 0 12px;
}

.formula-btns svg {
    width: 15px;
    height: 15px;
    vertical-align: middle;
}

.formula-text {
    flex: 1;
}

.formula-text code {
    flex: 1;
    align-self: stretch;
    margin-top: 4px;
    padding-left: 8px;
    background: var(--dark);
    color: #d4d4d4;
    font: 11px/19px "DejaVu Sans Mono", monospace;
}

.formula-text button {
    width: 21px;
}

.formula-text svg {
    width: 12px;
    height: 8px;
}

.str {
    color: #ce9178;
}

.kw {
    color: #4a94d8;
}

.ty {
    color: #2cbfa5;
}

.grid {
    position: relative;
    flex: 1;
    min-height: 0;
    overflow: hidden;
}

table {
    width: 1486px;
    table-layout: fixed;
    border-collapse: separate;
    border-spacing: 0;
    font-size: 11px;
}

.c-num {
    width: 30px;
}

.c-std {
    width: 160px;
}

.c-slow {
    width: 193px;
}

.c-moderate {
    width: 213px;
}

.c-last {
    width: 90px;
}

th, td {
    height: 21px;
    border-right: 1px solid var(--line);
    border-bottom: 1px solid var(--line);
    line-height: 16px;
}

th:first-child,
.quality td:first-child {
    border-left: 1px solid var(--line);
}

thead th {
    height: 22px;
    border-top: 1px solid var(--line);
    background: var(--dark);
}

thead th:nth-child(2) {
    background: #303030;
}

.th {
    display: flex;
    align-items: center;
    padding-left: 2px;
    color: #dcdcdc;
    font-weight: 600;
}

.th .type {
    flex: none;
    width: 22px;
    color: #fff;
    font-size: 13px;
    font-weight: 400;
    text-align: left;
}

.th svg.type {
    width: 16px;
    height: 16px;
    margin-right: 6px;
}

.th sup,
.th sub {
    font-size: 10px;
    line-height: 0;
}

.th sup {
    vertical-align: 4px;
}

.th sub {
    vertical-align: -2px;
}

.th button {
    width: 16px;
    height: 16px;
    margin: 0 2px 0 auto;
    line-height: 8px;
}

.th button svg {
    width: 8px;
    height: 5px;
}

thead th:nth-child(2) button {
    background: var(--dark);
}

.corner {
    width: 20px;
    height: 14px;
    margin-left: 3px;
    vertical-align: middle;
}

.quality td {
    height: 4px;
    border-bottom: none;
    border-right-color: #ddd;
    background: var(--teal);
}

.quality td:first-child {
    border-right-color: var(--line);
    border-bottom: 1px solid var(--line);
    background: var(--dark);
}

tbody th {
    background: var(--dark);
    color: #c8c8c8;
    font-size: 12px;
    font-weight: 400;
}

tbody td {
    padding-right: 3px;
    font-style: italic;
    font-weight: 500;
    text-align: right;
}

tbody td:nth-child(2) {
    background: #373737;
}

/* Scroll bars lie over the table */
.vscroll,
.hscroll {
    position: absolute;
    display: flex;
    align-items: center;
    background: var(--dark);
}

.vscroll {
    top: 26px;
    right: 0;
    bottom: 0;
    flex-direction: column;
    width: 17px;
    padding: 18px 0 34px;
}

.hscroll {
    left: 30px;
    right: 17px;
    bottom: 0;
    height: 17px;
    padding: 0 17px;
}

.track {
    flex: 1;
    width: 100%;
}

.vscroll svg {
    width: 12px;
    height: 8px;
}

.hscroll svg {
    width: 8px;
    height: 12px;
}

.vscroll .track,
.hscroll .track {
    margin: 8px 0;
}

.hscroll .track {
    margin: 0 9px;
}

.thumb {
    background: var(--select);
}

.vscroll .thumb {
    width: 15px;
    height: 72%;
    margin: 0 auto;
}

.hscroll .thumb {
    width: 75%;
    height: 15px;
}

/* Query settings */
.settings {
    display: flex;
    flex-direction: column;
    padding: 0 24px 25px 10px;
    border-left: 1px solid #777;
}

.settings .pane-head {
    padding-right: 2px;
}

.settings .pane-head svg {
    width: 12px;
    height: 12px;
}

.settings h3 {
    margin-top: 7px;
    font-size: 12px;
    font-weight: 600;
}

.settings .tri {
    margin-right: 7px;
}

.props {
    display: flex;
    flex-direction: column;
    padding: 4px 0 10px 13px;
}

.props input {
    height: 22px;
    padding: 0 5px;
    border: 1px solid #777;
    background: none;
    color: #fff;
    font: 11px "Open Sans", sans-serif;
}

.props a {
    margin-top: 10px;
    color: var(--green);
    text-decoration: none;
}

.steps {
    flex: 1;
    margin: 6px 0 0 13px;
    border: 1px solid #777;
}

.steps li {
    position: relative;
    display: flex;
    align-items: center;
    justify-content: space-between;
    height: 20px;
    padding: 0 7px 0 22px;
}

.steps .selected {
    background: var(--select);
    box-shadow: inset 2px 0 #217346;
}

.gear {
    width: 12px;
    height: 12px;
}

.remove {
    position: absolute;
    left: 6px;
    width: 12px;
    height: 12px;
}

/* Status bar */
.status {
    display: flex;
    gap: 12px;
    align-items: center;
    height: 22px;
    padding: 0 5px;
    border-top: 1px solid #777;
    background: var(--bg);
    color: #d8d8d8;
}

.preview {
    margin-left: auto;
}

/* Taskbar */
.taskbar {
    display: flex;
    align-items: center;
    height: 48px;
    padding-left: 12px;
    border-top: 1px solid #3c3c3c;
    background: #1f1f1f;
    font-size: 12px;
}

.app {
    position: relative;
    width: 40px;
    height: 40px;
    margin-right: 4px;
    border-radius: 4px;
}

.app svg {
    width: 24px;
    height: 24px;
    vertical-align: middle;
}

.search {
    display: flex;
    align-items: center;
    justify-content: center;
    gap: 6px;
    width: 100px;
    height: 32px;
    margin: 0 5px 0 2px;
    border-radius: 16px;
    background: #2c2c2c;
}

.search svg {
    width: 14px;
    height: 14px;
}

.running::after,
.current::after {
    content: '';
    position: absolute;
    left: 17px;
    bottom: 0;
    width: 6px;
    height: 3px;
    border-radius: 2px;
    background: #999;
}

.current {
    border: 1px solid #3c3c3c;
    background: #2b2b2b;
}

.current::after {
    left: 11px;
    width: 16px;
    background: #41b8f5;
}

.badge {
    position: absolute;
    top: 2px;
    right: 2px;
    width: 16px;
    height: 16px;
    border-radius: 50%;
    background: #41b8f5;
    color: #111;
    font-size: 10px;
    line-height: 16px;
}

.epic,
.games {
    fill: #fff;
    font: 700 8px "Liberation Sans", sans-serif;
}

.games {
    font-size: 5px;
}

.ps {
    fill: #31a8ff;
    font: 700 12px "Open Sans", sans-serif;
}

.tray {
    display: flex;
    align-items: center;
    margin-left: auto;
    padding-right: 19px;
}

.tray button svg {
    width: 12px;
    height: 8px;
}

.lang {
    margin: 0 17px 0 20px;
}

.net,
.vol {
    width: 18px;
    height: 18px;
    margin-right: 6px;
}

.tray time {
    min-width: 64px;
    text-align: right;
}

/* Watermark lies over the grid and the taskbar */
.watermark {
    position: absolute;
    left: 50%;
    bottom: 22px;
    width: 240px;
    height: 110px;
    margin-left: -120px;
    color: rgba(150, 150, 150, 0.75);
    text-align: center;
    pointer-events: none;
}

.watermark span {
    display: block;
}

.watermark .ar {
    font: 700 65px/72px "DejaVu Sans", sans-serif;
}

.watermark .en {
    font: 700 38px/38px "Liberation Sans", sans-serif;
}
```
